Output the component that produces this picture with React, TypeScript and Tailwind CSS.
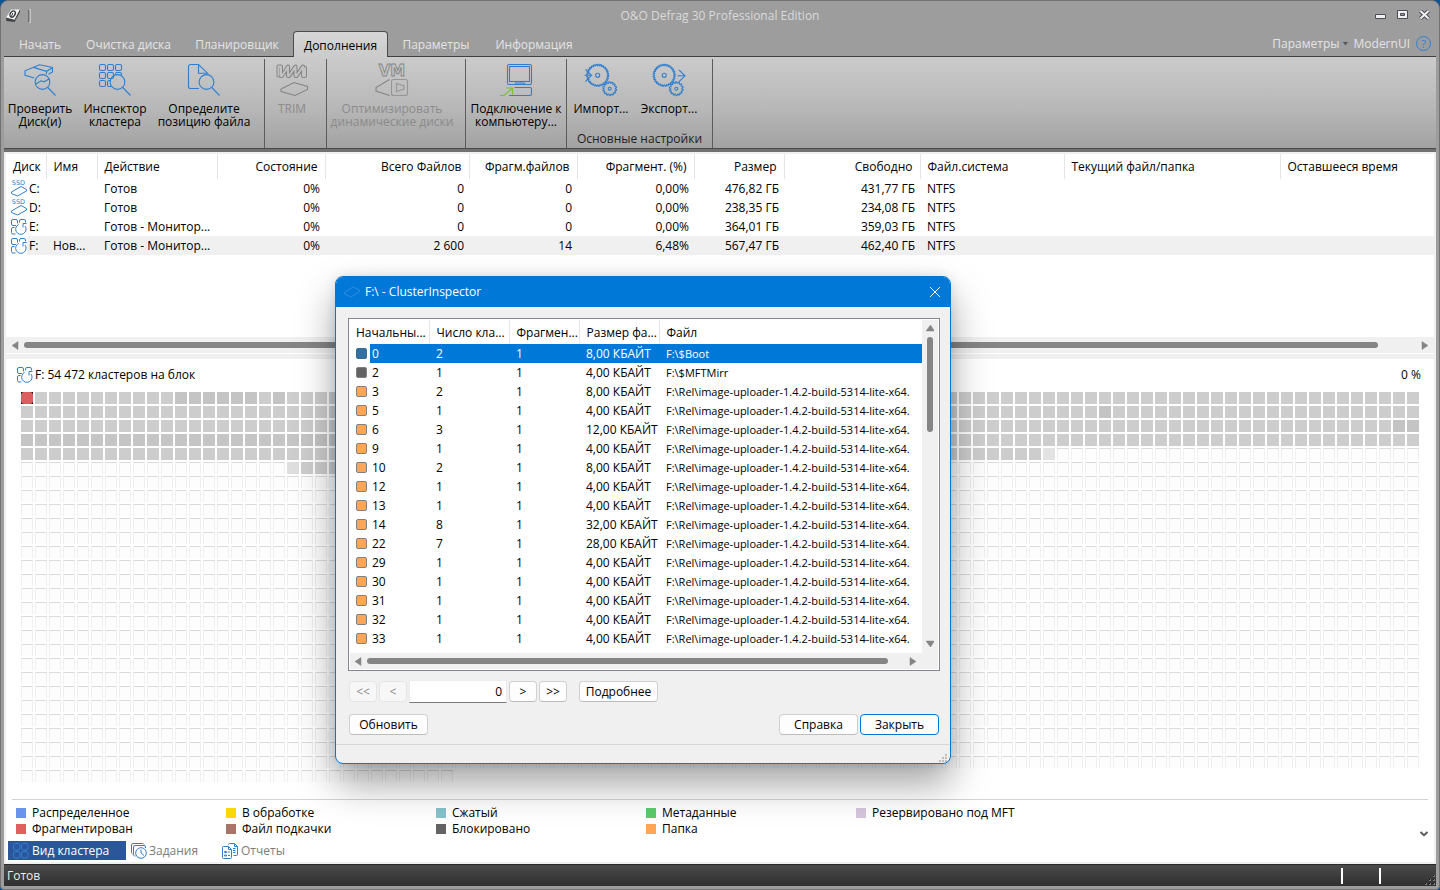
import React from "react";

const BLUE = "#2f7fd0";

function gearPath(cx: number, cy: number, r: number, teeth: number, depth: number) {
  const pts: string[] = [];
  for (let i = 0; i < teeth; i++) {
    const step = (Math.PI * 2) / teeth;
    const a = i * step;
    [
      [a, r - depth],
      [a + step * 0.25, r],
      [a + step * 0.55, r],
      [a + step * 0.8, r - depth],
    ].forEach(([t, rad]) => {
      pts.push(`${(cx + Math.cos(t) * rad).toFixed(2)} ${(cy + Math.sin(t) * rad).toFixed(2)}`);
    });
  }
  return `M${pts.join("L")}Z`;
}

function Svg32({ children, stroke = BLUE }: { children: React.ReactNode; stroke?: string }) {
  return (
    <svg width="32" height="32" viewBox="0 0 32 32" fill="none" stroke={stroke} strokeWidth="1.1" aria-hidden="true" className="shrink-0 overflow-visible">
      {children}
    </svg>
  );
}

const Magnifier = () => (
  <>
    <circle cx="18.5" cy="18" r="7.4" />
    <path d="M23.8 23.5 31.5 31.5" />
  </>
);

const CheckIcon = () => (
  <Svg32>
    <path d="M10.3 14 1 11.3V6.8L15.500 .8 28.5 3.4V8L24.5 10.3M9.5 3.4 22.5 7.3 28.5 3.8M22.5 7.3V10" />
    <path d="M12 20 17 16.8 20 17.8 25.500 14.8" />
    <Magnifier />
  </Svg32>
);

const InspectorIcon = () => (
  <Svg32>
    {[[0, 0], [8, 0], [16, 0], [0, 8], [8, 8], [0, 16]].map(([x, y]) => (
      <rect key={`${x}-${y}`} x={x + 0.5} y={y + 0.5} width="6" height="6" rx="1.5" />
    ))}
    <path d="M16.5 10V10a1.5 1.5 0 0 1 1.5-1.5h3a1.5 1.5 0 0 1 1.5 1.5v1M11 16.5h-1a1.5 1.5 0 0 0-1.5 1.5v3a1.5 1.5 0 0 0 1.5 1.5h3" />
    <Magnifier />
  </Svg32>
);

const FileIcon = () => (
  <Svg32>
    <path d="M11 24.5H2.5a2 2 0 0 1-2-2V2.5a2 2 0 0 1 2-2H10.5L19.5 9.2H10.5V.5" />
    <Magnifier />
  </Svg32>
);

const TrimIcon = () => (
  <Svg32 stroke="#858585">
    <g strokeLinecap="round" strokeLinejoin="round">
      <path d="M2.500 3.500V11.500M2.500 2.500H5V12H6L12 2.500V12H13L19.500 2.500V12H20.500L27 2.500V12H29V4" strokeWidth="4" />
      <path d="M2.500 3.500V11.500M2.500 2.500H5V12H6L12 2.500V12H13L19.500 2.500V12H20.500L27 2.500V12H29V4" strokeWidth="2" stroke="#c2c2c2" />
    </g>
    <path d="M5 25 18 18.5 31.5 22.5V25.5L19 31.5 5 27.5V25" />
  </Svg32>
);

const VmIcon = () => (
  <Svg32 stroke="#868686">
    <text x="16" y="11.500" textAnchor="middle" fontSize="15" fontWeight="700" strokeWidth="0.9" fontFamily="DejaVu Sans, sans-serif">VM</text>
    <path d="M13.5 15.5 0 23.5V27L13.5 31.5" />
    <rect x="15.5" y="15.5" width="16" height="16" rx="2" stroke="#969696" />
    <path d="M20.5 19.500v8l7.500-2.500v-3z" stroke="#969696" />
  </Svg32>
);

const ComputerIcon = () => (
  <Svg32>
    <rect x="7.5" y=".5" width="24" height="20" rx="1.5" />
    <rect x="9.5" y="2.5" width="20" height="15" />
    <path d="M9 20.5h6l1-1.5h8l1 1.5h6M14.5 23.5H30a1.5 1.5 0 0 1 1.5 1.5v5a1.5 1.5 0 0 1-1.5 1.5H9" />
    <path d="M0 31.5h4L12 24.5M6 24h6.5v6.5" stroke="#7ac131" />
  </Svg32>
);

const ImportIcon = () => (
  <Svg32>
    <path d={gearPath(12.7, 11.3, 11, 28, 1.3)} />
    <circle cx="12.7" cy="11.3" r="2" />
    <path d={gearPath(24.7, 24.7, 6.9, 14, 1.3)} />
    <circle cx="24.7" cy="24.7" r="1.5" />
    <path d="M-.5 11.3H6.5M.5 5.5 6.5 11.3.5 17.5" />
  </Svg32>
);

const ExportIcon = () => (
  <Svg32>
    <path d={gearPath(11.2, 11.3, 11, 28, 1.3)} />
    <circle cx="11.2" cy="11.3" r="2" />
    <path d={gearPath(23.3, 24.7, 6.9, 14, 1.3)} />
    <circle cx="23.3" cy="24.7" r="1.5" />
    <path d="M24.5 11.8H32M26 6l6 5.8-6 5.8" />
  </Svg32>
);

const SsdIcon = () => (
  <svg width="16" height="18" viewBox="0 0 16 18" fill="none" stroke={BLUE} aria-hidden="true" className="shrink-0 overflow-visible">
    <text x="7.500" y="4.800" textAnchor="middle" fontSize="6.500" fill={BLUE} stroke="none" fontFamily="DejaVu Sans, sans-serif">SSD</text>
    <path d="M.5 12 10 6.500l5.500 3v1.500L6.500 16 .5 13.500z" />
  </svg>
);

const MonitorIcon = () => (
  <svg width="16" height="16" viewBox="0 0 16 16" fill="none" stroke={BLUE} aria-hidden="true" className="shrink-0">
    <path d="M5 6.5H2A1.5 1.5 0 0 1 .5 5V2A1.5 1.5 0 0 1 2 .5H5A1.5 1.5 0 0 1 6.5 2V4.5M8.5 3.5V2A1.5 1.5 0 0 1 10 .5h3A1.5 1.5 0 0 1 14.5 2v1.5" />
    <path d="M3.5 8.5H2A1.5 1.5 0 0 0 .5 10v3.5A1.5 1.5 0 0 0 2 15H4.5" />
    <path d="M7.500 5.500A5.200 5.200 0 1 0 14 7M15.500 4.500H12v4" />
  </svg>
);

const AppIcon = () => (
  <svg width="16" height="16" viewBox="0 0 16 16" aria-hidden="true">
    <path d="M1 10 6 2 15 1.5 15 4 9.5 14 1.5 13z" fill="#3f4246" />
    <path d="M1 9.5 6 1.5 15 1.2 9.5 11.8z" fill="#f2f2f2" />
    <ellipse cx="7.6" cy="6" rx="2.3" ry="3.4" transform="rotate(35 7.6 6)" fill="#fff" stroke="#303338" strokeWidth="1.3" />
    <path d="M7.8 5 6.4 8.6" stroke="#303338" />
  </svg>
);

const GridTabIcon = () => (
  <svg width="16" height="16" viewBox="0 0 16 16" fill="none" stroke="#2f7fd0" aria-hidden="true" className="shrink-0">
    {[[0, 0], [8, 0], [0, 8], [8, 8]].map(([x, y]) => (
      <rect key={`${x}-${y}`} x={x + 0.5} y={y + 0.5} width="6.5" height="6.5" rx="2" />
    ))}
  </svg>
);

const JobsIcon = () => (
  <svg width="16" height="16" viewBox="0 0 16 16" fill="none" stroke={BLUE} aria-hidden="true" className="shrink-0">
    <path d="M1.5 11A1.5 1.5 0 0 1 .5 9.5V2A1.5 1.5 0 0 1 2 .5H11.5A1.5 1.5 0 0 1 13 1.5M4.5 13A1.5 1.5 0 0 1 2.5 11.5V4A1.5 1.5 0 0 1 4 2.5h9A1.5 1.5 0 0 1 14.5 4V5" />
    <circle cx="10" cy="10" r="5.3" />
    <path d="M10 6.5V10l3 2.5" />
  </svg>
);

const ReportsIcon = () => (
  <svg width="16" height="16" viewBox="0 0 16 16" fill="none" stroke={BLUE} aria-hidden="true" className="shrink-0">
    <path d="M.5 4.5A1 1 0 0 1 1.5 3.5H6.5L9.5 6.5V14.5A1 1 0 0 1 8.5 15.5H1.5A1 1 0 0 1 .5 14.5zM6.5 3.5V6.5H9.5" />
    <path d="M6.5 1.5A1 1 0 0 1 7.5.5H12.5L15.5 3.5V11.5A1 1 0 0 1 14.5 12.5H11.5M12.5.5V3.5H15.5M11 5.5H13.5M11 7.5H13.5M11 9.5H13.5" />
    <path d="M2.5 8.5h2v1h-2zM2.5 12h2v1h-2zM6 9h2M6 12.5h2" />
  </svg>
);

function Triangle({ dir }: { dir: "left" | "right" | "up" | "down" }) {
  const d = {
    left: "M7 0.5V8.5L1 4.5z",
    right: "M1 0.5V8.5L7 4.5z",
    up: "M0 7H8.5L4.5 1z",
    down: "M0 1H8.5L4.5 7z",
  }[dir];
  return (
    <svg width="8" height="9" viewBox="0 0 8 9" className="shrink-0" aria-hidden="true">
      <path d={d} fill="#858585" stroke="#858585" strokeWidth="0.5" strokeLinejoin="round" />
    </svg>
  );
}

const RIBBON_TABS = [
  { label: "Начать", cls: "w-[72px]" },
  { label: "Очистка диска", cls: "w-[105px]" },
  { label: "Планировщик", cls: "w-[112px]" },
  { label: "Дополнения", cls: "w-[95px]" },
  { label: "Параметры", cls: "w-[96px]" },
  { label: "Информация", cls: "w-[100px]" },
];

type Tool = { icon: React.ReactNode; lines: string[]; cls: string; disabled?: boolean };

const RIBBON_GROUPS: { cls: string; title?: string; tools: Tool[] }[] = [
  {
    cls: "w-[261px]",
    tools: [
      { icon: <CheckIcon />, lines: ["Проверить", "Диск(и)"], cls: "w-[72px]" },
      { icon: <InspectorIcon />, lines: ["Инспектор", "кластера"], cls: "w-[78px]" },
      { icon: <FileIcon />, lines: ["Определите", "позицию файла"], cls: "w-[100px]" },
    ],
  },
  { cls: "w-[62px]", tools: [{ icon: <TrimIcon />, lines: ["TRIM"], cls: "w-[54px]", disabled: true }] },
  {
    cls: "w-[139px]",
    tools: [{ icon: <VmIcon />, lines: ["Оптимизировать", "динамические диски"], cls: "w-[130px]", disabled: true }],
  },
  { cls: "w-[101px]", tools: [{ icon: <ComputerIcon />, lines: ["Подключение к", "компьютеру..."], cls: "w-[100px]" }] },
  {
    cls: "w-[146px]",
    title: "Основные настройки",
    tools: [
      { icon: <ImportIcon />, lines: ["Импорт..."], cls: "w-[68px]" },
      { icon: <ExportIcon />, lines: ["Экспорт..."], cls: "w-[68px]" },
    ],
  },
];

const DISK_COLS = [
  { label: "Диск", w: "w-[40px]", right: false },
  { label: "Имя", w: "w-[51px]", right: false },
  { label: "Действие", w: "w-[120px]", right: false },
  { label: "Состояние", w: "w-[108px]", right: true },
  { label: "Всего Файлов", w: "w-[144px]", right: true },
  { label: "Фрагм.файлов", w: "w-[108px]", right: true },
  { label: "Фрагмент. (%)", w: "w-[117px]", right: true },
  { label: "Размер", w: "w-[90px]", right: true },
  { label: "Свободно", w: "w-[136px]", right: true },
  { label: "Файл.система", w: "w-[144px]", right: false },
  { label: "Текущий файл/папка", w: "w-[216px]", right: false },
  { label: "Оставшееся время", w: "", right: false },
];

const DISKS = [
  { ssd: true, cells: ["C:", "", "Готов", "0%", "0", "0", "0,00%", "476,82 ГБ", "431,77 ГБ", "NTFS", "", ""] },
  { ssd: true, cells: ["D:", "", "Готов", "0%", "0", "0", "0,00%", "238,35 ГБ", "234,08 ГБ", "NTFS", "", ""] },
  { ssd: false, cells: ["E:", "", "Готов - Монитор...", "0%", "0", "0", "0,00%", "364,01 ГБ", "359,03 ГБ", "NTFS", "", ""] },
  { ssd: false, cells: ["F:", "Нов...", "Готов - Монитор...", "0%", "2 600", "14", "6,48%", "567,47 ГБ", "462,40 ГБ", "NTFS", "", ""] },
];

const LONG = "F:\\Rel\\image-uploader-1.4.2-build-5314-lite-x64.";
const CLUSTERS: [string, string, string, string][] = [
  ["0", "2", "8,00", "F:\\$Boot"],
  ["2", "1", "4,00", "F:\\$MFTMirr"],
  ["3", "2", "8,00", LONG],
  ["5", "1", "4,00", LONG],
  ["6", "3", "12,00", LONG],
  ["9", "1", "4,00", LONG],
  ["10", "2", "8,00", LONG],
  ["12", "1", "4,00", LONG],
  ["13", "1", "4,00", LONG],
  ["14", "8", "32,00", LONG],
  ["22", "7", "28,00", LONG],
  ["29", "1", "4,00", LONG],
  ["30", "1", "4,00", LONG],
  ["31", "1", "4,00", LONG],
  ["32", "1", "4,00", LONG],
  ["33", "1", "4,00", LONG],
];

const LEGEND = [
  ["Распределенное", "bg-[#6a93ee]"],
  ["В обработке", "bg-[#ffd700]"],
  ["Сжатый", "bg-[#86c2cd]"],
  ["Метаданные", "bg-[#5ccb6a]"],
  ["Резервировано под MFT", "bg-[#d5c6dd]"],
  ["Фрагментирован", "bg-[#e06060]"],
  ["Файл подкачки", "bg-[#a87468]"],
  ["Блокировано", "bg-[#636363]"],
  ["Папка", "bg-[#ffa556]"],
];

function cellClass(i: number) {
  const row = Math.floor(i / 100);
  const col = i % 100;
  if (row === 0 && (col === 11 || col === 12 || (col > 12 && col < 17) || col === 18)) return "bg-[#c4c4c4]";
  if (row === 1 && col === 77) return "bg-[#c4c4c4]";
  if (row === 2 && col > 97) return "bg-[#c4c4c4]";
  if (row === 3 && col < 60) return "bg-[#c5c5c5]";
  if (row < 4 || (row === 4 && col < 73)) return "bg-[#cdcdcd]";
  if (row === 4 && col === 73) return "bg-[#e3e3e3]";
  if (row === 5 && col === 19) return "bg-[#dedede]";
  if (row === 5 && col > 19 && col < 60) return "bg-[#cdcdcd]";
  return "border-x border-t border-x-[#efefef] border-t-[#dadada] bg-[#fdfdfd]";
}

const CELLS = Array.from({ length: 2730 }, (_, i) => cellClass(i + 1));

function Ribbon() {
  return (
    <div className="flex h-[92px] border-b border-[#4c4c4c] bg-linear-to-b from-[#cbcbcb] via-[#b8b8b8] via-55% to-[#a2a2a2] pt-0.5">
      {RIBBON_GROUPS.map((g, i) => (
        <div key={i} className={`flex shrink-0 flex-col justify-between border-r border-[#5c5c5c] ${g.cls}`}>
          <div className="flex">
            {g.tools.map((t) => (
              <button
                key={t.lines[0]}
                type="button"
                disabled={t.disabled}
                className={`flex shrink-0 flex-col items-center gap-1.5 pt-[5px] text-xs leading-[13px] whitespace-nowrap ${t.cls} ${t.disabled ? "text-[#8b8b8b]" : "text-black"}`}
              >
                {t.icon}
                <span>
                  {t.lines.map((l, k) => (
                    <React.Fragment key={l}>
                      {k > 0 && <br />}
                      {l}
                    </React.Fragment>
                  ))}
                </span>
              </button>
            ))}
          </div>
          {g.title && <div className="text-center text-xs leading-[18px] text-[#1e1e1e]">{g.title}</div>}
        </div>
      ))}
    </div>
  );
}

function DiskTable() {
  return (
    <table className="w-full table-fixed border-collapse text-xs leading-[19px] whitespace-nowrap">
      <thead>
        <tr className="h-[25px]">
          {DISK_COLS.map((c, i) => (
            <th
              key={c.label}
              scope="col"
              className={`overflow-hidden p-0 font-normal ${c.w} ${i < 11 ? "border-r border-[#e5e5e5]" : ""} ${c.right ? "pr-[7px] text-right" : "pl-[7px] text-left"}`}
            >
              {c.label}
            </th>
          ))}
        </tr>
      </thead>
      <tbody>
        {DISKS.map((d, r) => (
          <tr key={d.cells[0]} className={`h-[19px] ${r === 3 ? "bg-[#f0f0f0]" : ""}`}>
            {d.cells.map((c, i) => (
              <td
                key={i}
                className={`overflow-hidden p-0 ${i === 0 ? "bg-white" : DISK_COLS[i].right ? "pr-[5px] text-right" : "pl-[7px]"}`}
              >
                {i === 0 ? (
                  <span className="flex h-[19px] items-center">
                    <span className="flex w-[21px] shrink-0 justify-end bg-white">{d.ssd ? <SsdIcon /> : <MonitorIcon />}</span>
                    <span className={`h-[19px] grow pl-0.5 ${r === 3 ? "bg-[#f0f0f0]" : ""}`}>{c}</span>
                  </span>
                ) : (
                  c
                )}
              </td>
            ))}
          </tr>
        ))}
      </tbody>
    </table>
  );
}

const PUSH = "h-[21px] rounded border border-[#d0d0d0] border-b-[#bcbcbc] bg-[#fdfdfd] text-center text-xs leading-[19px]";
const PUSH_OFF = "h-[21px] w-7 rounded border border-[#e4e4e4] bg-[#f7f7f7] text-center text-xs leading-[19px] text-[#8a8a8a]";

function Inspector() {
  return (
    <section
      role="dialog"
      aria-label="ClusterInspector"
      className="absolute top-[276px] left-[335px] w-[616px] overflow-hidden rounded-lg border border-[#0078d7] bg-[#f0f0f0] shadow-[0_20px_38px_rgba(0,0,0,0.36),0_0_12px_rgba(0,0,0,0.1)]"
    >
      <header className="flex h-[30px] items-center bg-[#0078d7] pl-2 text-xs text-white">
        <svg width="16" height="12" viewBox="0 0 16 12" fill="none" stroke="#2f8be0" aria-hidden="true">
          <path d="M.5 6.5 9 1l6.5 3v1.5L7 11 .5 8z" />
        </svg>
        <h2 className="grow pl-[5px]">F:\ - ClusterInspector</h2>
        <button type="button" aria-label="Закрыть окно" className="mr-2.5">
          <svg width="10" height="10" viewBox="0 0 10 10" stroke="#fff" aria-hidden="true">
            <path d="M0 0 10 10M10 0 0 10" />
          </svg>
        </button>
      </header>

      <div className="mt-[11px] mr-2.5 ml-3 border border-[#828790] bg-white p-px">
        <div className="flex bg-[#f0f0f0]">
          <div className="h-[333px] min-w-0 grow overflow-hidden bg-white">
            <table className="w-full table-fixed border-collapse text-xs leading-[19px] whitespace-nowrap">
              <thead>
                <tr className="h-6">
                  <th scope="col" className="w-[79px] border-r border-[#e5e5e5] p-0 pl-1.5 text-left font-normal">Начальны...</th>
                  <th scope="col" className="w-20 border-r border-[#e5e5e5] p-0 pl-[7px] text-left font-normal">Число кла...</th>
                  <th scope="col" className="w-[70px] border-r border-[#e5e5e5] p-0 pl-[7px] text-left font-normal">Фрагмен...</th>
                  <th scope="col" className="w-20 border-r border-[#e5e5e5] p-0 pl-[7px] text-left font-normal">Размер фа...</th>
                  <th scope="col" className="p-0 pl-[7px] text-left font-normal">Файл</th>
                </tr>
              </thead>
              <tbody>
                {CLUSTERS.map((c, i) => (
                  <tr key={c[0]} className={`h-[19px] ${i === 0 ? "bg-[#0078d7] text-white" : ""}`}>
                    <td className="p-0">
                      <span className="flex h-[19px] items-center">
                        <span className="flex h-[19px] w-5 shrink-0 items-center bg-white pl-1.5">
                          <span
                            className={`h-[11px] w-[11px] rounded-[2px] border ${i === 0 ? "border-[#3a6a94] bg-[#31709f]" : i === 1 ? "border-[#808080] bg-[#636363]" : "border-[#808080] bg-[#ffa556]"}`}
                          />
                        </span>
                        <span className="pl-0.5">{c[0]}</span>
                      </span>
                    </td>
                    <td className="p-0 pl-[7px]">{c[1]}</td>
                    <td className="p-0 pl-[7px]">1</td>
                    <td className="p-0 pl-[7px]">{c[2]} КБАЙТ</td>
                    <td className="overflow-hidden p-0 pl-[7px] text-[11px]">{c[3]}</td>
                  </tr>
                ))}
              </tbody>
            </table>
          </div>
          <div className="flex w-4 shrink-0 flex-col items-center py-1" aria-hidden="true">
            <Triangle dir="up" />
            <div className="mt-1 h-[95px] w-1.5 rounded-full bg-[#858585]" />
            <div className="grow" />
            <Triangle dir="down" />
          </div>
        </div>
        <div className="flex h-4 items-center bg-[#f0f0f0] pr-[21px] pl-1" aria-hidden="true">
          <Triangle dir="left" />
          <div className="mr-[21px] ml-[5px] h-1.5 grow rounded-full bg-[#858585]" />
          <Triangle dir="right" />
        </div>
      </div>

      <div className="flex items-center gap-0.5 px-[13px] pt-[9px]">
        <button type="button" disabled className={PUSH_OFF}>&lt;&lt;</button>
        <button type="button" disabled className={PUSH_OFF}>&lt;</button>
        <input
          aria-label="Номер кластера"
          defaultValue="0"
          className="h-[23px] w-[98px] border border-[#ececec] border-b-[#7a7a7a] bg-white px-1 text-right text-xs outline-none"
        />
        <button type="button" className={`${PUSH} w-7`}>&gt;</button>
        <button type="button" className={`${PUSH} w-7`}>&gt;&gt;</button>
        <button type="button" className={`${PUSH} ml-2.5 w-[79px]`}>Подробнее</button>
      </div>
      <div className="flex gap-0.5 pt-[11px] pr-[11px] pb-[9px] pl-[13px]">
        <button type="button" className={`${PUSH} w-[79px]`}>Обновить</button>
        <div className="grow" />
        <button type="button" className={`${PUSH} w-[79px]`}>Справка</button>
        <button type="button" className="h-[21px] w-[79px] rounded border border-[#0078d7] bg-[#fdfdfd] text-center text-xs leading-[19px]">Закрыть</button>
      </div>
      <footer className="flex h-[19px] items-end justify-end border-t border-[#d7d7d7] pr-0.5">
        <svg width="9" height="9" viewBox="0 0 9 9" fill="#bdbdbd" aria-hidden="true">
          <path d="M6 0h2v2H6zM6 3h2v2H6zM3 3h2v2H3zM6 6h2v2H6zM3 6h2v2H3zM0 6h2v2H0z" />
        </svg>
      </footer>
    </section>
  );
}

export default function App() {
  return (
    <div className="relative flex min-h-screen flex-col overflow-hidden bg-[#0b5393] font-['Open_Sans','Noto_Sans',sans-serif] text-xs text-black">
      <div className="flex grow flex-col rounded-t-lg rounded-b-sm border border-[#727272] bg-[#9d9d9d] px-[3px] pb-[3px]">
        <header className="grid h-[30px] grid-cols-[1fr_auto_1fr] items-center">
          <div className="flex items-center gap-[7px] pl-px">
            <AppIcon />
            <span className="h-3.5 w-[3px] border border-[#c4c4c4] border-l-[#6d6d6d]" />
          </div>
          <h1 className="text-xs text-[#dadada]">O&amp;O Defrag 30 Professional Edition</h1>
          <div className="flex items-center justify-end gap-[11px] pr-1.5 pb-0.5">
            <button type="button" aria-label="Свернуть">
              <svg width="11" height="10" viewBox="0 0 11 10" aria-hidden="true"><path d="M.5 4.5h10v4H.5z" fill="#f0f0f0" stroke="#4c4c58" /></svg>
            </button>
            <button type="button" aria-label="Развернуть">
              <svg width="11" height="10" viewBox="0 0 11 10" aria-hidden="true">
                <path d="M.5.5h10v8H.5z" fill="#f0f0f0" stroke="#4c4c58" />
                <path d="M3.5 3.5h4v2h-4z" fill="#9d9d9d" stroke="#4c4c58" />
              </svg>
            </button>
            <button type="button" aria-label="Закрыть программу">
              <svg width="11" height="10" viewBox="0 0 11 10" aria-hidden="true">
                <path d="M1.5 1 9.5 8.5M9.5 1 1.5 8.5" stroke="#4c4c58" strokeWidth="4" />
                <path d="M1.5 1 9.5 8.5M9.5 1 1.5 8.5" stroke="#f0f0f0" strokeWidth="2" />
              </svg>
            </button>
          </div>
        </header>

        <nav className="flex h-[26px] items-stretch border-b border-[#3f3f3f]">
          {RIBBON_TABS.map((t) => (
            <button
              key={t.label}
              type="button"
              className={`shrink-0 pt-0.5 text-xs ${t.cls} ${
                t.label === "Дополнения"
                  ? "-mb-px rounded-t border border-b-0 border-[#4c4c4c] bg-linear-to-b from-[#d6d6d6] to-[#cbcbcb] text-black"
                  : "text-[#e4e4e4]"
              }`}
            >
              {t.label}
            </button>
          ))}
          <div className="ml-auto flex items-center pr-[5px] text-[#e4e4e4]">
            <button type="button" className="flex items-center gap-[3px] pr-1.5">
              Параметры
              <svg width="5" height="4" viewBox="0 0 5 4" aria-hidden="true"><path d="M0 0h5L2.5 3.5z" fill="#555" /></svg>
            </button>
            <button type="button" className="pr-1.5">ModernUI</button>
            <button type="button" aria-label="Справка" className="h-[15px] w-[15px] rounded-full border border-[#2f7fd0] text-center text-[11px] leading-[13px] text-[#2f7fd0]">?</button>
          </div>
        </nav>

        <Ribbon />

        <main className="flex grow flex-col border-t-[3px] border-[#717171] bg-[#f0f0f0] px-0.5 pt-0.5 pb-0.5">
          <div className="bg-white pb-px">
            <div className="min-h-[183px]">
              <DiskTable />
            </div>
            <div className="flex h-4 items-center justify-between bg-[#f0f0f0] px-[5px]" aria-hidden="true">
              <Triangle dir="left" />
              <div className="mr-[43px] ml-[5px] h-1.5 grow rounded-full bg-[#858585]" />
              <Triangle dir="right" />
            </div>
          </div>

          <div className="mt-[5px] flex grow flex-col bg-white">
            <div className="flex h-8 items-center justify-between pr-[13px] pl-[11px]">
              <div className="flex items-center gap-0.5">
                <MonitorIcon />
                F: 54 472 кластеров на блок
              </div>
              <span>0 %</span>
            </div>
            <div className="grid grow auto-rows-[12px] grid-cols-[repeat(auto-fill,12px)] content-start gap-0.5 pt-px pr-3.5 pl-[15px]">
              <span className="flex bg-black">
                <span className="grow rounded-[3px] bg-[#dc5e5e]" />
              </span>
              {CELLS.map((c, i) => (
                <span key={i} className={c} />
              ))}
            </div>
            <div className="mx-1.5 flex items-end border-t border-[#d4d4d4] pt-[5px]">
              <ul className="grid grow grid-cols-[repeat(5,210px)] pl-1 text-xs leading-4">
                {LEGEND.map(([label, color]) => (
                  <li key={label} className="flex items-center gap-1.5 whitespace-nowrap">
                    <span className={`h-2.5 w-2.5 ${color}`} />
                    {label}
                  </li>
                ))}
              </ul>
              <button type="button" aria-label="Свернуть легенду">
                <svg width="8" height="6" viewBox="0 0 8 6" fill="none" stroke="#5c5c5c" strokeWidth="2" aria-hidden="true"><path d="M.5 1 4 4.2 7.5 1" /></svg>
              </button>
            </div>
            <div className="mt-1 mb-0.5 flex h-[19px] items-stretch pl-0.5 text-[#7c7c7c]">
              <button type="button" className="flex w-[118px] items-center gap-[3px] bg-[#2b579a] pl-[5px] text-white">
                <GridTabIcon />
                Вид кластера
              </button>
              <button type="button" className="flex w-[91px] items-center gap-0.5 pl-[5px]">
                <JobsIcon />
                Задания
              </button>
              <button type="button" className="flex items-center gap-[3px] pl-[5px]">
                <ReportsIcon />
                Отчеты
              </button>
            </div>
          </div>
        </main>

        <footer className="flex h-[22px] items-center border-t border-[#2a2a2a] bg-linear-to-b from-[#4b4b4b] to-[#2f2f2f] pl-[3px] text-[#ededed]">
          <span className="grow">Готов</span>
          <span className="mr-9 h-4 w-0.5 bg-white" />
          <span className="mr-11 h-4 w-0.5 bg-white" />
          <svg width="11" height="11" viewBox="0 0 11 11" className="self-end" aria-hidden="true">
            <path d="M8 0h2v2H8zM8 4h2v2H8zM4 4h2v2H4zM8 8h2v2H8zM4 8h2v2H4zM0 8h2v2H0z" fill="#7a7a7a" />
            <path d="M8 0h1v1H8zM8 4h1v1H8zM4 4h1v1H4zM8 8h1v1H8zM4 8h1v1H4zM0 8h1v1H0z" fill="#111" />
          </svg>
        </footer>
      </div>
      <Inspector />
    </div>
  );
}
